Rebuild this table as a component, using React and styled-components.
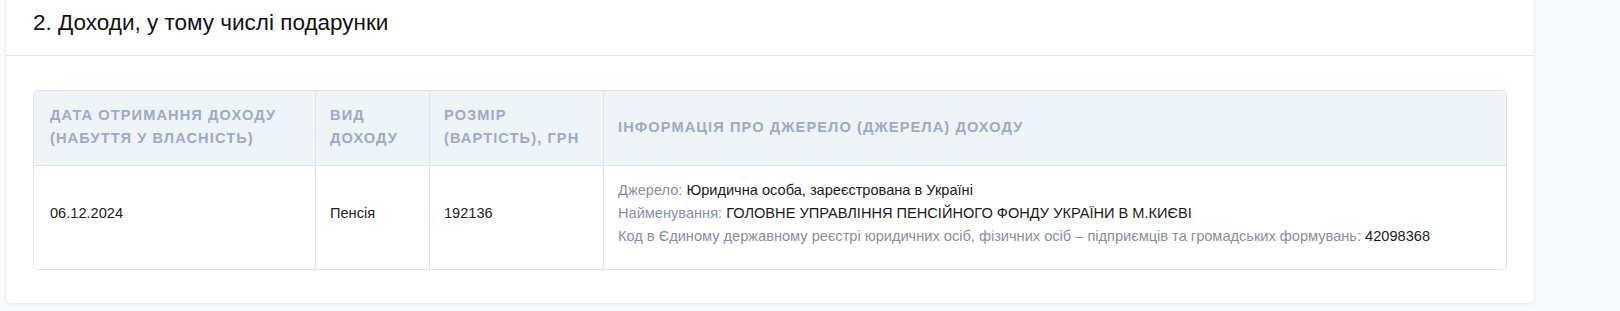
import React from "react"
import styled, { createGlobalStyle } from "styled-components"

const GlobalStyle = createGlobalStyle`
  * { box-sizing: border-box; }
  body {
    margin: 0;
    background: #f9fafb;
    font-family: "Liberation Sans", Arial, sans-serif;
    color: #222;
  }
`

const Page = styled.div`
  padding: 0 86px 0 5px;
  height: 311px;
  overflow: hidden;
`

const Card = styled.section`
  margin-top: -10px;
  width: 1530px;
  background: #fff;
  border: 1px solid #eceef2;
  border-radius: 5px;
  box-shadow: 0 1px 3px rgba(30, 40, 60, 0.04);
`

const CardHeader = styled.div`
  padding: 19px 27px 19px;
  border-bottom: 1px solid #e3e6ea;
`

const Title = styled.h2`
  margin: 0;
  font-size: 22.5px;
  line-height: 26px;
  font-weight: 400;
  color: #111;
`

const CardBody = styled.div`
  padding: 34px 27px 33px;
`

const Table = styled.table`
  width: 100%;
  table-layout: fixed;
  border-collapse: separate;
  border-spacing: 0;
  border: 1px solid #dfe3e8;
  border-radius: 5px;
  overflow: hidden;
`

const Th = styled.th`
  width: ${p => (p.$w ? `${p.$w}px` : "auto")};
  padding: 13px 14px 15px 14px;
  background: #eff4f8;
  border-bottom: 1px solid #dfe3e8;
  border-right: 1px solid #dfe3e8;
  text-align: left;
  vertical-align: middle;
  font-size: 14.6px;
  line-height: 23px;
  font-weight: 700;
  letter-spacing: 1.1px;
  text-transform: uppercase;
  color: #9aabc8;

  &:first-child {
    padding-left: 16px;
  }

  &:last-child {
    border-right: none;
  }
`

const Td = styled.td`
  padding: 13px 14px 21px 14px;
  border-right: 1px solid #dfe3e8;
  vertical-align: middle;
  font-size: 14.6px;
  line-height: 23px;
  color: #222;

  &:first-child {
    padding-left: 16px;
  }

  &:last-child {
    border-right: none;
  }
`

const InfoLine = styled.div`
  white-space: nowrap;
`

const Label = styled.span`
  color: #7f90ab;
`

const Value = styled.span`
  color: #1a1a1a;
`

const columns = [
  { title: "Дата отримання доходу (набуття у власність)", w: 282 },
  { title: "Вид доходу", w: 114 },
  { title: "Розмір (вартість), грн", w: 174 },
  { title: "Інформація про джерело (джерела) доходу" },
]

const rows = [
  {
    date: "06.12.2024",
    kind: "Пенсія",
    amount: "192136",
    info: [
      ["Джерело", "Юридична особа, зареєстрована в Україні"],
      ["Найменування", "ГОЛОВНЕ УПРАВЛІННЯ ПЕНСІЙНОГО ФОНДУ УКРАЇНИ В М.КИЄВІ"],
      [
        "Код в Єдиному державному реєстрі юридичних осіб, фізичних осіб – підприємців та громадських формувань",
        "42098368",
      ],
    ],
  },
]

const App = () => (
  <>
    <GlobalStyle />
    <Page>
      <Card>
        <CardHeader>
          <Title>2. Доходи, у тому числі подарунки</Title>
        </CardHeader>
        <CardBody>
          <Table>
            <thead>
              <tr>
                {columns.map(c => (
                  <Th key={c.title} $w={c.w}>{c.title}</Th>
                ))}
              </tr>
            </thead>
            <tbody>
              {rows.map(r => (
                <tr key={r.date}>
                  <Td>{r.date}</Td>
                  <Td>{r.kind}</Td>
                  <Td>{r.amount}</Td>
                  <Td>
                    {r.info.map(([label, value]) => (
                      <InfoLine key={label}>
                        <Label>{label}:</Label> <Value>{value}</Value>
                      </InfoLine>
                    ))}
                  </Td>
                </tr>
              ))}
            </tbody>
          </Table>
        </CardBody>
      </Card>
    </Page>
  </>
)

export default App
